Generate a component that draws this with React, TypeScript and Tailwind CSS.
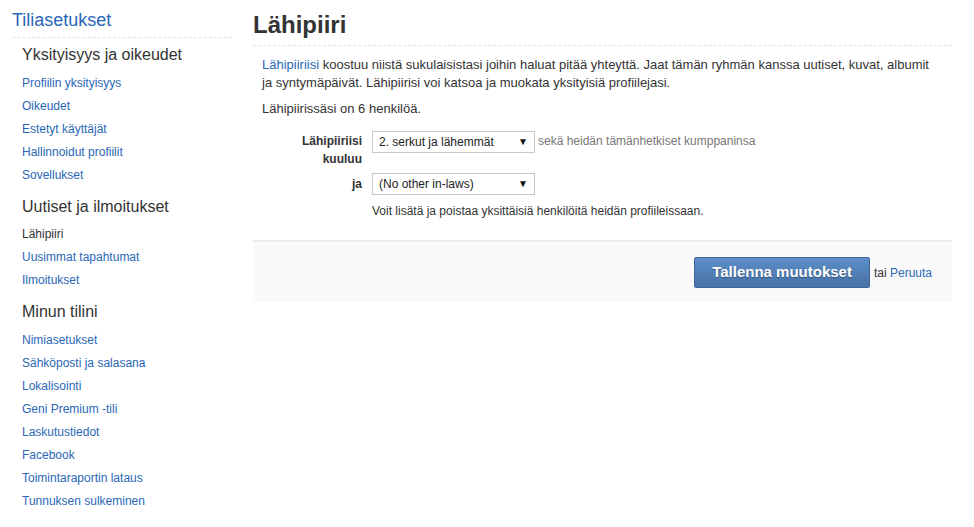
import React from 'react';

const sections = [
  {
    title: 'Yksityisyys ja oikeudet',
    links: ['Profiilin yksityisyys', 'Oikeudet', 'Estetyt käyttäjät', 'Hallinnoidut profiilit', 'Sovellukset'],
  },
  {
    title: 'Uutiset ja ilmoitukset',
    links: ['Lähipiiri', 'Uusimmat tapahtumat', 'Ilmoitukset'],
  },
  {
    title: 'Minun tilini',
    links: [
      'Nimiasetukset',
      'Sähköposti ja salasana',
      'Lokalisointi',
      'Geni Premium -tili',
      'Laskutustiedot',
      'Facebook',
      'Toimintaraportin lataus',
      'Tunnuksen sulkeminen',
    ],
  },
];

const active = 'Lähipiiri';

function FakeSelect({ value }: { value: string }) {
  return (
    <div className="relative w-[163px] h-[22px] border border-[#c8c8c8] bg-white flex items-center pl-[6px] text-[12px] text-[#222]">
      <span>{value}</span>
      <span className="absolute right-[6px] top-[4px] text-[10px] leading-[12px] text-[#111]">▼</span>
    </div>
  );
}

export default function App() {
  return (
    <div className="flex min-h-[527px] bg-white text-[#333] font-['Liberation_Sans',Arial,sans-serif]">
      <aside className="w-[253px] pl-3 shrink-0">
        <div className="w-[220px] pt-[9px] pb-[4px] border-b border-dashed border-[#e2e2e2]">
          <a className="text-[18px] leading-[22px] text-[#2a67b6]">Tiliasetukset</a>
        </div>
        <nav className="pl-[10px]">
          {sections.map((s, i) => (
            <div key={s.title}>
              <h3 className={(i === 0 ? 'mt-[7px]' : 'mt-[10px]') + ' mb-[6.5px] text-[16px] leading-[20px] text-[#333]'}>
                {s.title}
              </h3>
              <ul>
                {s.links.map((l) => (
                  <li
                    key={l}
                    className={
                      'text-[12px] leading-[23px] ' + (l === active ? 'text-[#333]' : 'text-[#2a67b6]')
                    }
                  >
                    {l}
                  </li>
                ))}
              </ul>
            </div>
          ))}
        </nav>
      </aside>

      <main className="flex-1 pr-[22px]">
        <h1 className="pt-[10px] pb-[5px] border-b border-dashed border-[#e2e2e2] text-[24px] leading-[30px] font-bold text-[#333]">
          Lähipiiri
        </h1>
        <div className="pl-[9px] pr-[20px] text-[12px] leading-[18px]">
          <p className="mt-[10px] text-[13px]">
            <span className="text-[#2a67b6]">Lähipiiriisi</span> koostuu niistä sukulaisistasi joihin haluat pitää
            yhteyttä. Jaat tämän ryhmän kanssa uutiset, kuvat, albumit ja syntymäpäivät. Lähipiirisi voi katsoa ja
            muokata yksityisiä profiilejasi.
          </p>
          <p className="mt-[8px] text-[13px]">Lähipiirissäsi on 6 henkilöä.</p>

          <div className="mt-[13px] grid grid-cols-[100px_auto] gap-x-[10px] gap-y-[5px]">
            <div className="pt-[1px] text-right font-bold">
              Lähipiiriisi
              <br />
              kuuluu
            </div>
            <div className="flex items-start gap-[3px]">
              <FakeSelect value="2. serkut ja lähemmät" />
              <span className="leading-[20px] text-[#777]">sekä heidän tämänhetkiset kumppaninsa</span>
            </div>
            <div className="pt-[2px] text-right font-bold">ja</div>
            <div>
              <FakeSelect value="(No other in-laws)" />
            </div>
            <div />
            <div className="mt-[2px]">Voit lisätä ja poistaa yksittäisiä henkilöitä heidän profiileissaan.</div>
          </div>
        </div>

        <div className="mt-[20px] border-t-2 border-[#ececec] bg-[#fafafa] pt-[15px] pb-[14px] pr-[20px] flex justify-end items-center gap-[4px] text-[12px]">
          <button className="h-[31px] px-[17px] rounded-[2px] border border-[#3f6597] bg-gradient-to-b from-[#5d8fc8] to-[#4771a7] text-white text-[15px] font-bold [text-shadow:0_1px_1px_rgba(0,0,0,0.35)]">
            Tallenna muutokset
          </button>
          <span className="text-[#333]">
            tai <a className="text-[#2a67b6]">Peruuta</a>
          </span>
        </div>
      </main>
    </div>
  );
}
